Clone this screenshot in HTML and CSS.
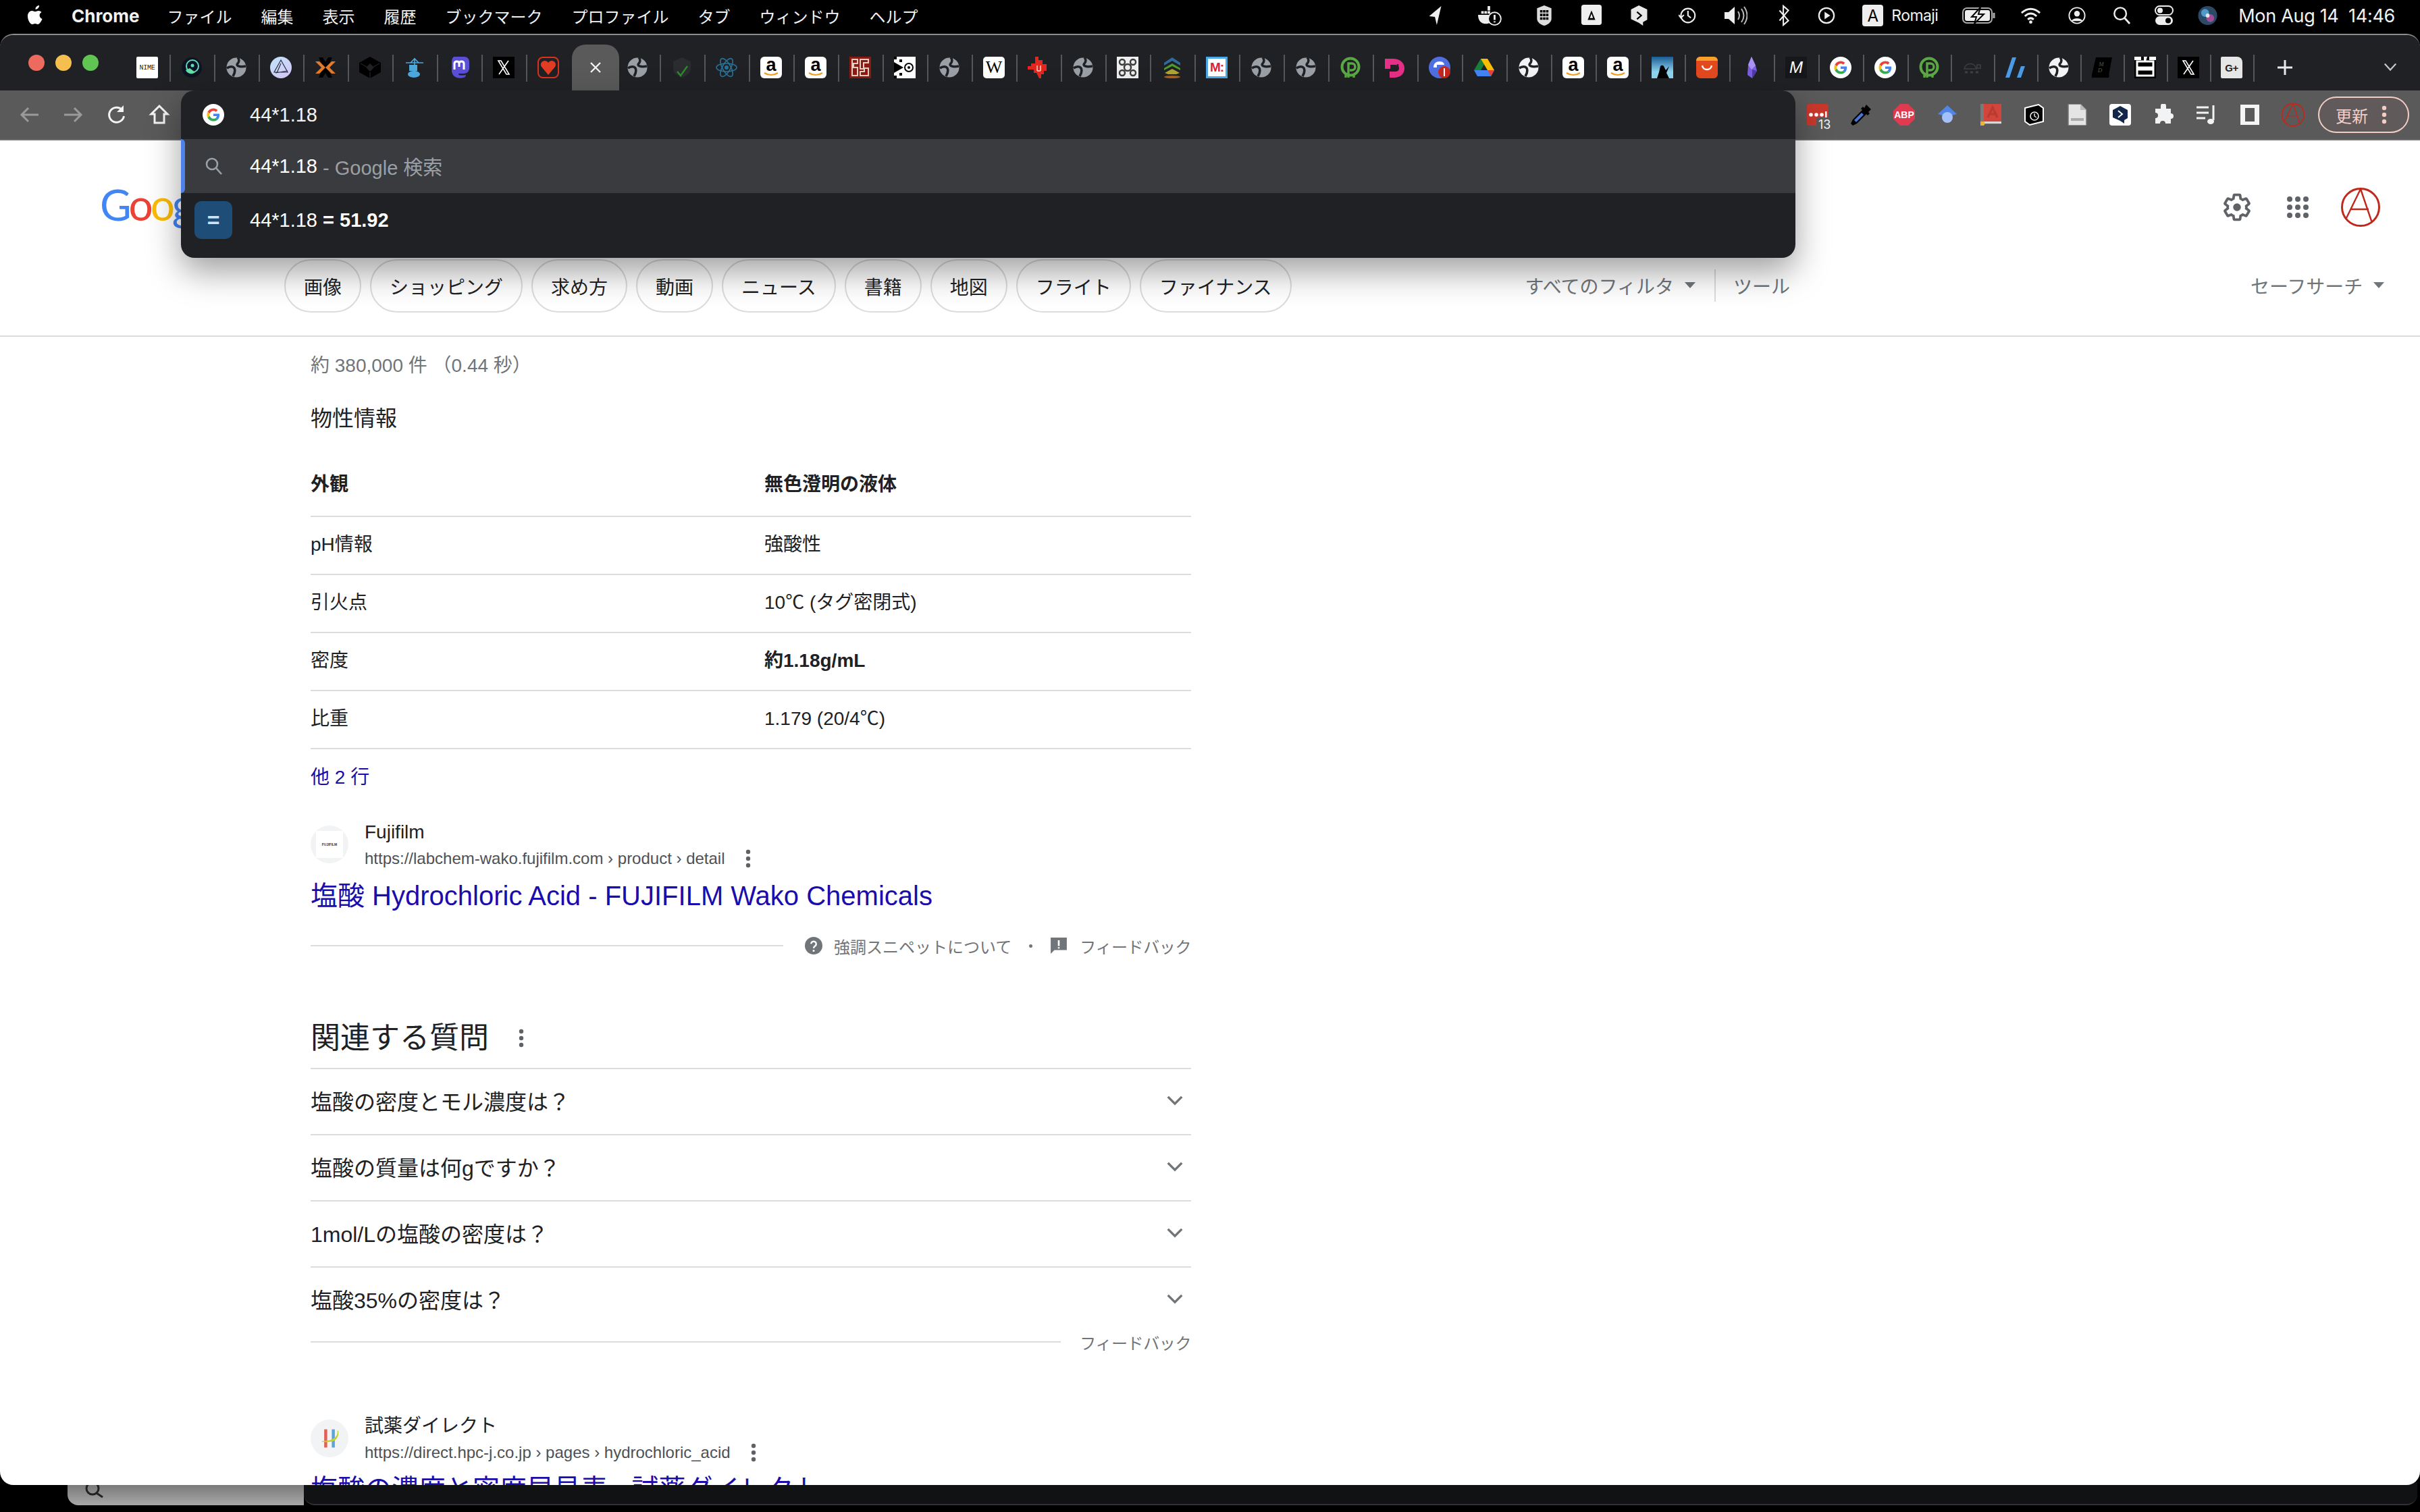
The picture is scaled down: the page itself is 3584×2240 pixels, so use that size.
FILE: index.html
```html
<!DOCTYPE html>
<html lang="ja">
<head>
<meta charset="utf-8">
<title>44*1.18 - Google 検索</title>
<link rel="stylesheet" href="styles.css">
</head>
<body>
<svg class="defs" aria-hidden="true">
  <defs>
    <linearGradient id="lilac" x1="0" y1="0" x2="1" y2="1"><stop offset="0" stop-color="#bfe3f7"/><stop offset="1" stop-color="#d9c7fb"/></linearGradient>
    <symbol id="globe" viewBox="0 0 32 32"><circle cx="16" cy="16" r="14.5" fill="currentColor"/><path d="M2 17c4-3 9-3 11 0 1.500 3 1 7-2 12M18 1c3 3 2 7 0 9-3 3 2 6 12 4" fill="none" stroke="#202124" stroke-width="3.600"/></symbol>
    <symbol id="g" viewBox="0 0 32 32"><circle cx="16" cy="16" r="16" fill="#fff"/><g transform="translate(6.4 6.4) scale(.4)"><path fill="#EA4335" d="M24 9.5c3.54 0 6.71 1.22 9.21 3.6l6.85-6.85C35.9 2.38 30.47 0 24 0 14.62 0 6.51 5.38 2.56 13.22l7.98 6.19C12.43 13.72 17.74 9.5 24 9.5z"/><path fill="#4285F4" d="M46.98 24.55c0-1.57-.15-3.09-.38-4.55H24v9.02h12.94c-.58 2.96-2.26 5.48-4.78 7.18l7.73 6c4.51-4.18 7.09-10.36 7.09-17.65z"/><path fill="#FBBC05" d="M10.53 28.59c-.48-1.45-.76-2.99-.76-4.59s.27-3.14.76-4.59l-7.98-6.19C.92 16.46 0 20.12 0 24c0 3.88.92 7.54 2.56 10.78l7.97-6.19z"/><path fill="#34A853" d="M24 48c6.48 0 11.93-2.13 15.89-5.81l-7.73-6c-2.15 1.45-4.92 2.3-8.16 2.3-6.26 0-11.57-4.22-13.47-9.91l-7.98 6.19C6.51 42.62 14.62 48 24 48z"/></g></symbol>
    <symbol id="amazon" viewBox="0 0 32 32"><rect width="32" height="32" rx="6" fill="#fff"/><text x="16" y="21" text-anchor="middle" class="svg-amazon">a</text><path d="M6 24c6 4 14 4 20 0" fill="none" stroke="#f49f1c" stroke-width="2.2"/></symbol>
    <symbol id="xlogo" viewBox="0 0 32 32"><rect width="32" height="32" fill="#000"/><path d="M8 6h4l12 20h-4zM23 6 9 26" fill="none" stroke="#fff" stroke-width="1.6"/></symbol>
    <symbol id="pgreen" viewBox="0 0 32 32"><circle cx="16" cy="15" r="12.500" fill="none" stroke="#5ba744" stroke-width="4"/><path d="M13 31V10h5a5 5 0 0 1 0 10h-3M9 27v4M21 27v4" fill="none" stroke="#5ba744" stroke-width="3.400"/></symbol>
    <symbol id="kebab" viewBox="0 0 8 32"><circle cx="4" cy="6" r="3.2" fill="currentColor"/><circle cx="4" cy="16" r="3.2" fill="currentColor"/><circle cx="4" cy="26" r="3.2" fill="currentColor"/></symbol>
    <symbol id="chev" viewBox="0 0 28 28"><path d="M5 9.5l9 9 9-9" fill="none" stroke="#70757a" stroke-width="3"/></symbol>
    <symbol id="av" viewBox="0 0 60 60"><circle cx="30" cy="30" r="27.5" fill="none" stroke="#c0281c" stroke-width="3"/><path d="M30 3 8 48M30 3l17 50M16 33h26" fill="none" stroke="#c0281c" stroke-width="2.4"/></symbol>
  </defs>
</svg>

<header class="menubar">
  <svg class="apple" viewBox="0 0 26 32"><path fill="#fff" d="M18 1c.3 3-2.500 6-5.500 5.800C12.200 4 15 1.200 18 1zM21.500 11c-1.700 1-2.900 2.700-2.900 4.800 0 2.600 1.600 4.300 3.900 5.200-.7 2.100-3.600 8-6.500 8-1.500 0-2.200-1-4-1s-2.600 1-4 1C4.500 29 1 22.500 1 17c0-5 3.200-8 6.300-8 1.800 0 3.200 1.200 4.600 1.200 1.300 0 3-1.300 5-1.300 1.800 0 3.500.7 4.600 2.100z"/></svg>
  <b class="menu-app">Chrome</b>
  <nav class="menu-items">
    <span>ファイル</span><span>編集</span><span>表示</span><span>履歴</span><span>ブックマーク</span><span>プロファイル</span><span>タブ</span><span>ウィンドウ</span><span>ヘルプ</span>
  </nav>
  <div class="status">
    <svg class="st w22" viewBox="0 0 22 34"><path fill="#eee" d="M20 2 13 32l-3-13-9-1z"/></svg>
    <svg class="st w40 m48" viewBox="0 0 40 34"><path fill="#eee" d="M3 16h24c0 8-3 14-12 14C7 30 3 24 3 16zM8 10h4v4H8zM13 10h4v4h-4zM18 10h4v4h-4zM18 2h4v7h-4z"/><circle cx="29" cy="22" r="10" fill="#000" stroke="#eee" stroke-width="2"/><path d="M29 16v8M29 26v2" stroke="#eee" stroke-width="3"/></svg>
    <svg class="st w28 m48" viewBox="0 0 28 36"><path fill="#ddd" d="M14 1l12 5v17c0 6-6 10-12 12C8 33 2 29 2 23V6z"/><path fill="#000" d="M7 9h4v4H7zM12 9h4v4h-4zM17 9h4v4h-4zM7 15h4v4H7zM12 15h4v4h-4zM17 15h4v4h-4zM7 21h4v4H7zM12 21h4v4h-4zM17 21h4v4h-4z"/></svg>
    <svg class="st w32 m40" viewBox="0 0 32 34"><rect width="32" height="32" rx="4" fill="#eee"/><path d="M16 9l6 15H10z" fill="#000"/><path d="M16 14l2.500 7h-5z" fill="#eee"/></svg>
    <svg class="st w29 m40" viewBox="0 0 29 36"><path fill="#e8e8e8" d="M14 1l14 7v17l-7 4 0 6-7-5-13-6V8z"/><path d="M11 12l7 6-7 6" fill="none" stroke="#000" stroke-width="2.500"/></svg>
    <svg class="st w26 m44" viewBox="0 0 30 30"><circle cx="16" cy="15" r="12" fill="none" stroke="#eee" stroke-width="2.400"/><path d="M16 7v8l5 4M0 14l4 5 5-5" fill="none" stroke="#eee" stroke-width="2.400"/></svg>
    <svg class="st w36 m40" viewBox="0 0 36 30"><path fill="#eee" d="M2 10h6l9-8v26l-9-8H2z"/><path d="M22 9q4 6 0 12M27 5q7 10 0 20M31 2q9 13 0 26" fill="none" stroke="#bbb" stroke-width="2"/></svg>
    <svg class="st w20 m44" viewBox="0 0 20 34"><path d="M3 9l14 16-8 7V2l8 7L3 25" fill="none" stroke="#eee" stroke-width="2.200"/></svg>
    <svg class="st w26 m40" viewBox="0 0 28 28"><circle cx="14" cy="14" r="12" fill="none" stroke="#eee" stroke-width="2.400"/><path d="M11 8l9 6-9 6z" fill="#eee"/></svg>
    <span class="input-box m40">A</span>
    <span class="romaji">Romaji</span>
    <svg class="st w50 m36" viewBox="0 0 50 26"><rect x="1" y="2" width="43" height="22" rx="6" fill="none" stroke="#aaa" stroke-width="2"/><rect x="4" y="5" width="37" height="16" rx="3" fill="#eee"/><path d="M47 9v8" stroke="#aaa" stroke-width="3"/><path d="M27 1 14 15h7l-3 10 14-14h-8z" fill="#eee" stroke="#000" stroke-width="2"/></svg>
    <svg class="st w31 m36" viewBox="0 0 32 26"><path d="M2 9q14-12 28 0M7 14q9-8 18 0M11.500 19q4.500-4 9 0" fill="none" stroke="#eee" stroke-width="3"/><circle cx="16" cy="23" r="2.500" fill="#eee"/></svg>
    <svg class="st w26 m40" viewBox="0 0 28 28"><circle cx="14" cy="14" r="12.500" fill="none" stroke="#eee" stroke-width="2"/><circle cx="14" cy="11" r="4.500" fill="#eee"/><path d="M5 23c2-6 16-6 18 0z" fill="#eee"/></svg>
    <svg class="st w26 m40" viewBox="0 0 28 30"><circle cx="12" cy="12" r="9.500" fill="none" stroke="#eee" stroke-width="2.600"/><path d="M19 19l8 9" stroke="#eee" stroke-width="3"/></svg>
    <svg class="st w28 m36" viewBox="0 0 28 30"><rect x="1" y="1" width="26" height="13" rx="6.500" fill="none" stroke="#eee" stroke-width="2"/><circle cx="8" cy="7.500" r="4" fill="#eee"/><rect x="1" y="16" width="26" height="13" rx="6.500" fill="#eee"/><circle cx="20" cy="22.500" r="4" fill="#000"/></svg>
    <svg class="st w29 m36 siri" viewBox="0 0 30 30"><circle cx="15" cy="15" r="14.500" fill="#2b4a66"/><circle cx="11" cy="11" r="6" fill="#4f9ac9"/><circle cx="19" cy="19" r="6" fill="#a14d96"/><circle cx="15" cy="15" r="3" fill="#e3e3e3"/></svg>
    <span class="clock">Mon Aug 14&nbsp; 14:46</span>
  </div>
</header>

<div class="window">
  <div class="tabstrip">
    <div class="lights"><i class="red"></i><i class="yellow"></i><i class="green"></i></div>
    <div class="tabs">
      <div class="tab"><span class="nime">NIME</span></div>
      <div class="tab"><svg class="fav" viewBox="0 0 32 32"><circle cx="16" cy="16" r="15" fill="#0c1424"/><circle cx="17" cy="14" r="9" fill="none" stroke="#5fdcbc" stroke-width="2"/><path d="M7 20a9 9 0 0 0 14 3l-8-6z" fill="#62e0a5"/><circle cx="17" cy="13" r="2.500" fill="#5fdcbc"/></svg></div>
      <div class="tab"><svg class="fav c-gray"><use href="#globe"/></svg></div>
      <div class="tab"><svg class="fav" viewBox="0 0 32 32"><circle cx="16" cy="16" r="16" fill="url(#lilac)"/><path d="M16 5 6 23h20zM16 10 10 24M8 24l18-3" fill="none" stroke="#2c3040" stroke-width="1.200"/></svg></div>
      <div class="tab"><svg class="fav" viewBox="0 0 32 32"><path d="M6 1h6l4 7 4-7h6l-7 15 7 15h-6l-4-7-4 7H6l7-15z" fill="#000"/><path d="M1 7h6l9 9-9 9H1l9-9zM31 7h-6l-9 9 9 9h6l-9-9z" fill="#e5792a"/></svg></div>
      <div class="tab"><svg class="fav" viewBox="0 0 32 32"><path d="M16 0 32 9v14l-16 9L0 23V9z" fill="#000"/><path d="M16 11l5 5-5 5-5-5zM2 10l9 5M30 10l-9 5M16 23v9" stroke="#202124" stroke-width="1.400" fill="#202124"/></svg></div>
      <div class="tab"><svg class="fav" viewBox="0 0 32 32"><path d="M3 9h26M16 2v20M10 9l6-6 6 6" fill="none" stroke="#4da8dc" stroke-width="1.600"/><rect x="8" y="12" width="12" height="9" fill="#4da8dc"/><ellipse cx="15" cy="26" rx="9" ry="5" fill="#4da8dc"/></svg></div>
      <div class="tab"><svg class="fav" viewBox="0 0 32 32"><path d="M9 0h14c5 0 8 3 8 8v9c0 5-4 8-8 8h-8c0 3 3 3 11 2l-1 3c-6 3-18 3-20-8V8c0-5 2-8 4-8z" fill="#5b4fd8"/><path d="M9 19V10c0-4 7-4 7 0v5M16 15v-5c0-4 7-4 7 0v9" fill="none" stroke="#fff" stroke-width="3"/></svg></div>
      <div class="tab"><svg class="fav"><use href="#xlogo"/></svg></div>
      <div class="tab nosep"><svg class="fav" viewBox="0 0 32 32"><rect x="1" y="1" width="30" height="30" rx="7" fill="#202124" stroke="#d8321e" stroke-width="2"/><path d="M16 27 6 15c-3-5 1-9 5-9 3 0 5 3 5 3s2-3 5-3c4 0 8 4 5 9z" fill="#e23d24"/></svg></div>
      <div class="tab active nosep"><svg class="close" viewBox="0 0 20 20"><path d="M3 3l14 14M17 3 3 17" stroke="#f1f3f4" stroke-width="2.400"/></svg></div>
      <div class="tab"><svg class="fav c-gray"><use href="#globe"/></svg></div>
      <div class="tab"><svg class="fav" viewBox="0 0 32 32"><path d="M16 1 29 7v11c0 7-8 11-13 13C10 29 3 25 3 18V7z" fill="#2a2c2f"/><path d="M9 22l5 6 10-14" fill="none" stroke="#2e8b2e" stroke-width="2.400"/></svg></div>
      <div class="tab"><svg class="fav" viewBox="0 0 32 32"><g fill="none" stroke="#2a7198" stroke-width="1.700"><ellipse cx="16" cy="16" rx="15" ry="6"/><ellipse cx="16" cy="16" rx="15" ry="6" transform="rotate(60 16 16)"/><ellipse cx="16" cy="16" rx="15" ry="6" transform="rotate(120 16 16)"/></g><circle cx="16" cy="16" r="3" fill="#2a7198"/></svg></div>
      <div class="tab"><svg class="fav"><use href="#amazon"/></svg></div>
      <div class="tab"><svg class="fav"><use href="#amazon"/></svg></div>
      <div class="tab"><svg class="fav" viewBox="0 0 32 32"><rect width="32" height="32" fill="#8a1a14"/><path d="M4 4h8v6H6v6h6v12H4zM16 4h12v5h-7v8h7v11H16v-6h6v-4h-6z" fill="none" stroke="#e6cfc0" stroke-width="2"/></svg></div>
      <div class="tab"><svg class="fav" viewBox="0 0 32 32"><rect width="32" height="32" fill="#fff"/><path d="M0 0h4v4H0zM0 8l14 8L0 24zM0 28h4v4H0zM8 4h4v4H8zM8 24h4v4H8z" fill="#000"/><circle cx="22" cy="16" r="6" fill="none" stroke="#000" stroke-width="2"/><circle cx="22" cy="16" r="2" fill="#000"/></svg></div>
      <div class="tab"><svg class="fav c-gray"><use href="#globe"/></svg></div>
      <div class="tab"><svg class="fav" viewBox="0 0 32 32"><rect width="32" height="32" rx="5" fill="#fff"/><text x="16" y="24" text-anchor="middle" class="svg-w">W</text></svg></div>
      <div class="tab"><svg class="fav" viewBox="0 0 32 32"><path d="M11 0h5v5h6v6h6v10h-4v5h-4v6h-3l-4-8H9v-5H0v-5h5v-4h6z" fill="#e2281e"/><path d="M13 13h2v8h-2zM18 13h2v8h-2zM14 20h5v2h-5z" fill="#f7a8a2"/></svg></div>
      <div class="tab"><svg class="fav c-gray"><use href="#globe"/></svg></div>
      <div class="tab"><svg class="fav" viewBox="0 0 32 32"><rect width="32" height="32" fill="#eee"/><g fill="none" stroke="#3b3b3b" stroke-width="2.400"><circle cx="16" cy="16" r="5"/><circle cx="8" cy="8" r="4"/><circle cx="24" cy="8" r="4"/><circle cx="8" cy="24" r="4"/><circle cx="24" cy="24" r="4"/></g></svg></div>
      <div class="tab"><svg class="fav" viewBox="0 0 32 32"><path d="M4 9 16 1l12 8v4L16 6 4 13z" fill="#2e6a9e"/><path d="M4 17l12-7 12 7v3l-12-6-12 6z" fill="#4e9a2e"/><path d="M5 24l11-6 11 6-5 2H10z" fill="#b0a332"/><ellipse cx="16" cy="30" rx="12" ry="2" fill="#a9601f"/></svg></div>
      <div class="tab"><span class="mcol">M:</span></div>
      <div class="tab"><svg class="fav c-gray"><use href="#globe"/></svg></div>
      <div class="tab"><svg class="fav c-gray"><use href="#globe"/></svg></div>
      <div class="tab"><svg class="fav"><use href="#pgreen"/></svg></div>
      <div class="tab"><svg class="fav" viewBox="0 0 32 32"><path d="M1 3h12c10 0 17 6 17 14 0 9-7 14-15 14H8v-9h8c4 0 6-2 6-5 0-4-3-5-7-5H9v6H1z" fill="#e62f86"/><path d="M12 17h8v-6" stroke="#202124" stroke-width="2.400" fill="none"/></svg></div>
      <div class="tab"><svg class="fav" viewBox="0 0 32 32"><circle cx="16" cy="16" r="16" fill="#4f6fe0"/><path d="M7 16c0-6 4-9 9-9s7 3 7 5H12v4z" fill="#fff"/><circle cx="23" cy="23" r="9" fill="#c5271d"/><path d="M23 17v12" stroke="#fff" stroke-width="2"/></svg></div>
      <div class="tab"><svg class="fav" viewBox="0 0 32 32"><path d="M11 3h10L11 20H1z" fill="#188038"/><path d="M21 3l10 17H21L11 3z" fill="#fbbc04"/><path d="M1 20h30l-5 9H6z" fill="#4285f4"/><path d="M21 20h10l-5 9z" fill="#ea4335"/></svg></div>
      <div class="tab"><svg class="fav c-white"><use href="#globe"/></svg></div>
      <div class="tab"><svg class="fav"><use href="#amazon"/></svg></div>
      <div class="tab"><svg class="fav"><use href="#amazon"/></svg></div>
      <div class="tab"><svg class="fav" viewBox="0 0 32 32"><defs><linearGradient id="kin" x1="0" y1="0" x2="0" y2="1"><stop offset="0" stop-color="#1a5c94"/><stop offset=".7" stop-color="#8fd3ee"/></linearGradient></defs><rect width="32" height="32" fill="url(#kin)"/><path d="M8 32l3-9 2-9a3 3 0 0 1 5 0l3 6 5-6-4 10 4 8z" fill="#000"/></svg></div>
      <div class="tab"><svg class="fav" viewBox="0 0 32 32"><rect width="32" height="32" rx="6" fill="#e3491f"/><path d="M0 6a6 6 0 0 1 6-6h20a6 6 0 0 1 6 6z" fill="#f5a12c"/><path d="M9 13c1 8 13 8 14 0" fill="none" stroke="#fff" stroke-width="2.400"/></svg></div>
      <div class="tab"><svg class="fav" viewBox="0 0 32 32"><path d="M16 0l6 13 2 8-7 11-7-5 1-15z" fill="#7c5fe0"/><path d="M16 0l6 13-6 6-5-7z" fill="#a993f2"/><path d="M17 32l7-11-7-2z" fill="#4f3aa8"/></svg></div>
      <div class="tab"><span class="m-italic">M</span></div>
      <div class="tab"><svg class="fav"><use href="#g"/></svg></div>
      <div class="tab"><svg class="fav"><use href="#g"/></svg></div>
      <div class="tab narrow"><svg class="fav"><use href="#pgreen"/></svg></div>
      <div class="tab narrow"><svg class="fav" viewBox="0 0 32 32"><path d="M4 18c2-10 16-10 18 0zM23 12h5v5h-5z" fill="none" stroke="#3d3f42" stroke-width="1.600"/><path d="M5 23h4M13 23h4M21 23h4" stroke="#3d3f42" stroke-width="3"/></svg></div>
      <div class="tab narrow"><svg class="fav" viewBox="0 0 32 32"><path d="M11 1h6L7 31H1zM24 14h6l-6 17h-6z" fill="#4a9ae8"/></svg></div>
      <div class="tab narrow"><svg class="fav c-white"><use href="#globe"/></svg></div>
      <div class="tab narrow"><svg class="fav" viewBox="0 0 32 32"><path d="M7 1h24l-5 26H1z" fill="#000"/><path d="M1 27v4h25l1-4" fill="#000"/><text x="15" y="14" text-anchor="middle" class="svg-md">M</text><text x="13" y="23" text-anchor="middle" class="svg-md">D</text></svg></div>
      <div class="tab narrow"><svg class="fav" viewBox="0 0 32 32"><rect width="32" height="32" fill="#000"/><path d="M4 7h24v9H4zM4 19h24v9H4z" fill="#000" stroke="#fff" stroke-width="3"/><path d="M14 0h5l-2 7h-3z" fill="#fff"/><path d="M0 0h10v5H0zM22 0h10v5H22z" fill="#fff"/></svg></div>
      <div class="tab narrow"><svg class="fav"><use href="#xlogo"/></svg></div>
      <div class="tab narrow"><span class="gplus">G+</span></div>
    </div>
    <svg class="plus" viewBox="0 0 24 24"><path d="M12 1v22M1 12h22" stroke="#e8eaed" stroke-width="3"/></svg>
    <svg class="tab-chev" viewBox="0 0 24 24"><path d="M3 7l9 10 9-10" fill="none" stroke="#c4c7c5" stroke-width="2.400"/></svg>
  </div>

  <div class="toolbar">
    <div class="tool-nav">
      <svg class="ti" viewBox="0 0 32 32"><path d="M29 16H5M14 6 4 16l10 10" fill="none" stroke="#9a9a9a" stroke-width="3"/></svg>
      <svg class="ti" viewBox="0 0 32 32"><path d="M3 16h24M18 6l10 10-10 10" fill="none" stroke="#9a9a9a" stroke-width="3"/></svg>
      <svg class="ti" viewBox="0 0 32 32"><path d="M25 9a11 11 0 1 0 2.500 9" fill="none" stroke="#f1f3f4" stroke-width="3"/><path d="M27 2v10H17z" fill="#f1f3f4"/></svg>
      <svg class="ti" viewBox="0 0 32 32"><path d="M16 3 4 15h5v13h14V15h5z" fill="none" stroke="#f1f3f4" stroke-width="3"/></svg>
    </div>
    <div class="tool-ext">
      <div class="ext-box"><svg class="ti" viewBox="0 0 32 32"><rect width="32" height="32" rx="3" fill="#c9372c"/><circle cx="6" cy="16" r="2.800" fill="#fff"/><circle cx="14" cy="16" r="2.800" fill="#fff"/><circle cx="22" cy="16" r="2.800" fill="#fff"/><rect x="27" y="11" width="2.500" height="10" fill="#fff"/></svg><span class="badge">13</span></div>
      <svg class="ti" viewBox="0 0 32 32"><path d="M24 1l7 7-4 4 2 2-3 3-2-2L10 29l-6 3-3-3 3-6L18 9l-2-2 3-3 2 2z" fill="#000"/><path d="M17 13l3 3L9 27l-3-3z" fill="#4a74d8"/></svg>
      <svg class="ti" viewBox="0 0 32 32"><path d="M10 0h12l10 10v12L22 32H10L0 22V10z" fill="#e03a50"/><text x="16" y="21" text-anchor="middle" class="svg-abp">ABP</text></svg>
      <svg class="ti" viewBox="0 0 32 32"><path d="M16 2l14 13-14 4L2 15z" fill="#4f86e8"/><circle cx="16" cy="20" r="8" fill="#a3c0fa"/></svg>
      <svg class="ti" viewBox="0 0 32 32"><rect x="6" width="26" height="30" fill="#d1453b"/><rect x="1" width="5" height="30" fill="#7a7a7a"/><rect x="6" y="26" width="26" height="3" fill="#d8d8d8"/><path d="M12 20l7-15 7 15M15 15h8" fill="none" stroke="#b83a31" stroke-width="3"/><path d="M1 26h5l2 3-2 3H1z" fill="#e5b53c"/></svg>
      <svg class="ti" viewBox="0 0 32 32"><path d="M3 6l20-5 7 5v20l-20 5-7-5z" fill="#000" stroke="#fff" stroke-width="2"/><circle cx="17" cy="18" r="6" fill="none" stroke="#eee" stroke-width="1.600"/><path d="M17 14v4l3 2" stroke="#eee" fill="none" stroke-width="1.400"/></svg>
      <svg class="ti" viewBox="0 0 32 32"><path d="M3 0h18l9 9v23H3z" fill="#e4e4e4" stroke="#777" stroke-width="1.600"/><path d="M21 0v9h9" fill="#bbb"/><rect x="7" y="21" width="19" height="4" fill="#aaa"/></svg>
      <svg class="ti" viewBox="0 0 32 32"><rect width="32" height="32" rx="4" fill="#fff"/><path d="M16 3l11 6v12l-5 3v5l-6-4-11-5V9z" fill="#13274b"/><path d="M13 10l6 5-6 5" fill="none" stroke="#fff" stroke-width="2"/></svg>
      <svg class="ti" viewBox="0 0 32 32"><path d="M12 3a4 4 0 0 1 8 0v4h7v7a4 4 0 0 1 0 8v7h-8a4 4 0 0 0-8 0H4v-8a4 4 0 0 0 0-8V7h8z" fill="#f1f3f4"/></svg>
      <svg class="ti" viewBox="0 0 32 32"><path d="M1 5h18M1 13h18M1 21h13" stroke="#f1f3f4" stroke-width="3"/><path d="M26 2v22" stroke="#f1f3f4" stroke-width="3"/><ellipse cx="22" cy="26" rx="5" ry="4" fill="#f1f3f4"/></svg>
      <svg class="ti" viewBox="0 0 32 32"><path d="M2 1h28v30H2zM9 6v20h14V6z" fill="#f4f4f4" fill-rule="evenodd"/></svg>
      <svg class="ti-av"><use href="#av"/></svg>
    </div>
    <div class="update"><span>更新</span><svg class="update-dots"><use href="#kebab"/></svg></div>
  </div>

  <main class="page">
    <div class="page-head">
      <div class="head-top">
        <div class="logo"><span class="lb">G</span><span class="lr">o</span><span class="ly">o</span><span class="lb">g</span><span class="lg">l</span><span class="lr">e</span></div>
        <div class="head-icons">
          <svg class="gear" viewBox="0 0 24 24"><path fill="none" stroke="#5f6368" stroke-width="2" d="M19.140 12.940c.04-.3.06-.61.06-.94 0-.32-.02-.64-.07-.94l2.030-1.580c.18-.14.23-.41.12-.61l-1.920-3.320c-.12-.22-.37-.29-.59-.22l-2.390.96c-.5-.38-1.030-.7-1.620-.94l-.36-2.540c-.04-.24-.24-.41-.48-.41h-3.840c-.24 0-.43.17-.47.41l-.36 2.540c-.59.24-1.130.57-1.620.94l-2.390-.96c-.22-.08-.47 0-.59.22L2.740 8.870c-.12.21-.08.47.12.61l2.030 1.580c-.05.3-.09.63-.09.94s.02.64.07.94l-2.030 1.580c-.18.14-.23.41-.12.61l1.920 3.320c.12.22.37.29.59.22l2.390-.96c.5.38 1.030.7 1.620.94l.36 2.540c.05.24.24.41.48.41h3.840c.24 0 .44-.17.47-.41l.36-2.540c.59-.24 1.130-.56 1.620-.94l2.390.96c.22.08.47 0 .59-.22l1.920-3.320c.12-.22.07-.47-.12-.61l-2.010-1.580z"/><circle cx="12" cy="12" r="3" fill="#5f6368"/></svg>
          <svg class="apps" viewBox="0 0 34 34"><g fill="#5f6368"><circle cx="5" cy="5" r="4"/><circle cx="17" cy="5" r="4"/><circle cx="29" cy="5" r="4"/><circle cx="5" cy="17" r="4"/><circle cx="17" cy="17" r="4"/><circle cx="29" cy="17" r="4"/><circle cx="5" cy="29" r="4"/><circle cx="17" cy="29" r="4"/><circle cx="29" cy="29" r="4"/></g></svg>
          <svg class="avatar"><use href="#av"/></svg>
        </div>
      </div>
      <div class="head-bottom">
        <div class="chips">
          <span class="chip">画像</span><span class="chip">ショッピング</span><span class="chip">求め方</span><span class="chip">動画</span><span class="chip">ニュース</span><span class="chip">書籍</span><span class="chip">地図</span><span class="chip">フライト</span><span class="chip">ファイナンス</span>
        </div>
        <div class="filters"><span>すべてのフィルタ</span><i class="tri"></i><span class="filter-tools">ツール</span></div>
        <div class="safe"><span>セーフサーチ</span><i class="tri"></i></div>
      </div>
    </div>

    <div class="results">
      <p class="stats">約 380,000 件 （0.44 秒）</p>
      <h2 class="snippet-h">物性情報</h2>
      <div class="facts">
        <div class="fact fact-first"><b>外観</b><b>無色澄明の液体</b></div>
        <div class="fact"><span>pH情報</span><span>強酸性</span></div>
        <div class="fact"><span>引火点</span><span>10℃ (タグ密閉式)</span></div>
        <div class="fact"><span>密度</span><b>約1.18g/mL</b></div>
        <div class="fact"><span>比重</span><span>1.179 (20/4℃)</span></div>
      </div>
      <a class="more">他 2 行</a>

      <div class="source">
        <span class="site-ico"><span class="fuji-box">FUJIFILM</span></span>
        <div class="source-text">
          <div class="site-name">Fujifilm</div>
          <div class="site-url"><span>https://labchem-wako.fujifilm.com › product › detail</span><svg class="kebab"><use href="#kebab"/></svg></div>
        </div>
      </div>
      <a class="res-title">塩酸 Hydrochloric Acid - FUJIFILM Wako Chemicals</a>
      <div class="snip-foot">
        <i class="rule"></i>
        <svg class="foot-ico" viewBox="0 0 24 24"><circle cx="12" cy="12" r="12" fill="#70757a"/><path d="M8.500 9.500a3.500 3.500 0 1 1 5.500 3c-1.500 1-2 1.500-2 3" fill="none" stroke="#fff" stroke-width="2.200"/><circle cx="12" cy="19" r="1.400" fill="#fff"/></svg>
        <span class="foot-about">強調スニペットについて</span>
        <i class="foot-dot"></i>
        <svg class="foot-ico" viewBox="0 0 24 24"><path d="M1 1h22v17H6l-5 5z" fill="#70757a"/><path d="M12 4.500v8M12 14v2" stroke="#fff" stroke-width="2.400"/></svg>
        <span class="foot-fb">フィードバック</span>
      </div>

      <div class="paa-head"><h2>関連する質問</h2><svg class="kebab paa-kebab"><use href="#kebab"/></svg></div>
      <div class="paa">
        <div class="q"><span>塩酸の密度とモル濃度は？</span><svg class="q-chev"><use href="#chev"/></svg></div>
        <div class="q"><span>塩酸の質量は何gですか？</span><svg class="q-chev"><use href="#chev"/></svg></div>
        <div class="q"><span>1mol/Lの塩酸の密度は？</span><svg class="q-chev"><use href="#chev"/></svg></div>
        <div class="q"><span>塩酸35%の密度は？</span><svg class="q-chev"><use href="#chev"/></svg></div>
      </div>
      <div class="paa-foot"><i class="rule"></i><span class="foot-fb-plain">フィードバック</span></div>

      <div class="source source-2">
        <span class="site-ico"><svg class="hpc" viewBox="0 0 32 32"><path d="M11 4v24" stroke="#e2605a" stroke-width="4"/><path d="M21 4v24" stroke="#5aa6dc" stroke-width="4"/><path d="M27 6c1 8-6 14-21 14 8 1 15 1 19-4 2-3 3-6 2-10z" fill="#c4d22f" stroke="#c4d22f"/></svg></span>
        <div class="source-text">
          <div class="site-name">試薬ダイレクト</div>
          <div class="site-url"><span>https://direct.hpc-j.co.jp › pages › hydrochloric_acid</span><svg class="kebab"><use href="#kebab"/></svg></div>
        </div>
      </div>
      <a class="res-title res-title-2">塩酸の濃度と密度早見表 - 試薬ダイレクト</a>
    </div>
  </main>

  <div class="omni">
    <div class="omni-row omni-input"><svg class="omni-ico"><use href="#g"/></svg><span>44*1.18</span></div>
    <div class="omni-row omni-sel"><svg class="omni-ico" viewBox="0 0 32 32"><circle cx="14" cy="13" r="8" fill="none" stroke="#9aa0a6" stroke-width="2.600"/><path d="M20 19l8 9" stroke="#9aa0a6" stroke-width="2.600"/></svg><span>44*1.18</span><span class="omni-dim">&nbsp;- Google 検索</span></div>
    <div class="omni-row omni-calc"><span class="calc-ico">=</span><span>44*1.18 <b>= 51.92</b></span></div>
  </div>
</div>

<div class="behind">
  <div class="blue-strip"></div>
  <div class="behind-row">
    <div class="behind-search"><svg class="behind-mag" viewBox="0 0 28 28"><circle cx="11" cy="9" r="9" fill="none" stroke="#222" stroke-width="3"/><path d="M17 16l9 6" stroke="#222" stroke-width="3"/></svg></div>
    <div class="behind-dark"></div>
  </div>
</div>
</body>
</html>
```

FILE: styles.css
```css
* { box-sizing: border-box; }
html, body { margin: 0; padding: 0; }
body {
  width: 3584px;
  height: 2240px;
  overflow: hidden;
  background: #000;
  font-family: "Liberation Sans", "Noto Sans CJK JP", sans-serif;
  color: #202124;
}
.defs { position: absolute; width: 0; height: 0; }
.svg-amazon { font: 700 27px "Liberation Sans", sans-serif; fill: #000; }
.svg-w { font: 400 26px "Liberation Serif", serif; fill: #000; }
.svg-abp { font: 700 14px "Liberation Sans", sans-serif; fill: #fff; }
.svg-md { font: italic 400 9px "Liberation Serif", serif; fill: #555; }

/* macOS menu bar */
.menubar {
  height: 50px;
  display: flex;
  align-items: center;
  padding: 0 37px 4px 40px;
  color: #f2f2f2;
  font: 400 24px "Noto Sans CJK JP", sans-serif;
}
.apple { width: 26px; height: 32px; flex: none; }
.menu-app { margin-left: 40px; font: 700 26px Inter, "Liberation Sans", sans-serif; }
.menu-items { display: flex; gap: 43px; margin-left: 41px; }
.status { margin-left: auto; display: flex; align-items: center; }
.st { height: 32px; flex: none; }
.w20 { width: 20px; } .w22 { width: 22px; } .w26 { width: 26px; } .w28 { width: 28px; }
.w29 { width: 29px; } .w31 { width: 31px; } .w32 { width: 32px; } .w36 { width: 36px; }
.w40 { width: 40px; } .w50 { width: 50px; }
.m36 { margin-left: 36px; } .m40 { margin-left: 40px; } .m44 { margin-left: 44px; } .m48 { margin-left: 48px; }
.input-box {
  width: 31px; height: 32px; border-radius: 4px; background: #eee; color: #000;
  display: flex; align-items: center; justify-content: center;
  font: 400 24px Inter, sans-serif;
}
.romaji { margin-left: 12px; font: 400 23px Inter, sans-serif; letter-spacing: -.6px; }
.clock { margin-left: 31px; font: 400 27px Inter, sans-serif; letter-spacing: -.3px; white-space: nowrap; }

/* Browser window */
.window {
  position: relative;
  height: 2150px;
  background: #202124;
  border-top: 2px solid #8d8d8d;
  border-radius: 20px;
}
.tabstrip {
  height: 82px;
  padding-top: 14px;
  display: flex;
  background: #202124;
  border-radius: 20px 20px 0 0;
}
.lights { width: 187px; flex: none; display: flex; gap: 16px; padding-left: 42px; align-items: flex-start; padding-top: 15px; }
.lights i { width: 24px; height: 24px; border-radius: 50%; }
.red { background: #ed6a5e; } .yellow { background: #f5bf4f; } .green { background: #61c554; }
.tabs { display: flex; flex: none; }
.tab {
  position: relative;
  width: 66px;
  height: 68px;
  padding-right: 4px;
  display: flex;
  align-items: center;
  justify-content: center;
}
.tab.narrow { width: 64px; }
.tab::after {
  content: "";
  position: absolute;
  right: 0; top: 15px;
  width: 2px; height: 40px;
  background: #55575b;
}
.tab.nosep::after { display: none; }
.tab.active { background: #5a5a5a; border-radius: 20px 20px 0 0; padding-right: 0; width: 70px; margin-right: -4px; }
.tab.active::before {
  content: "";
  position: absolute;
  left: -14px; right: -14px; bottom: 0;
  height: 14px;
  z-index: -1;
  background: #5a5a5a;
  clip-path: polygon(0 100%, 14px 0, 84px 0, 100% 100%);
}
.fav { width: 32px; height: 32px; flex: none; }
.c-gray { color: #9aa0a6; }
.c-white { color: #f1f3f4; }
.close { width: 20px; height: 20px; }
.nime {
  width: 32px; height: 32px; background: #fff; border-radius: 2px; color: #222;
  display: flex; align-items: center; justify-content: center;
  font: 400 10px "Liberation Mono", monospace; letter-spacing: -.3px;
}
.mcol {
  width: 32px; height: 32px; background: #fff; border: 3px solid #4aa8e8; color: #d8233a;
  display: flex; align-items: center; justify-content: center;
  font: 700 19px "Liberation Sans", sans-serif; letter-spacing: -1px;
}
.m-italic {
  width: 32px; height: 32px; background: #16171a; color: #fff;
  display: flex; align-items: center; justify-content: center;
  font: italic 400 24px "Liberation Sans", sans-serif;
}
.gplus {
  width: 32px; height: 32px; background: #e6e6e6; color: #222; border-radius: 2px 8px 2px 2px;
  display: flex; align-items: center; justify-content: center;
  font: 700 15px "Liberation Sans", sans-serif; letter-spacing: -.5px;
}
.plus { width: 24px; height: 24px; margin: 22px 0 0 33px; flex: none; }
.tab-chev { width: 22px; height: 22px; margin: 22px 33px 0 auto; flex: none; }

.toolbar {
  height: 74px;
  background: #5a5a5a;
  border-bottom: 2px solid #6d6d6d;
  display: flex;
  align-items: center;
  padding: 0 16px 0 28px;
}
.tool-nav, .tool-ext { display: flex; gap: 32px; align-items: center; }
.tool-ext { margin-left: auto; margin-right: 21px; }
.ti { width: 32px; height: 32px; flex: none; }
.ti-av { width: 36px; height: 36px; margin: 0 -2px; flex: none; }
.ext-box { position: relative; width: 32px; height: 32px; }
.badge {
  position: absolute; left: 14px; top: 20px;
  padding: 0 3px;
  background: #5a5a5a; border-radius: 4px;
  color: #f1f3f4;
  font: 400 18px Inter, sans-serif;
}
.update {
  width: 135px; height: 54px;
  border: 2px solid #f4cdc6; border-radius: 27px;
  background: #605a5a;
  color: #f4cdc6;
  font-size: 24px;
  display: flex; align-items: center; gap: 20px;
  padding-left: 24px;
}
.update-dots { width: 8px; height: 32px; color: #f4cdc6; }

/* Page */
.page {
  height: 1992px;
  overflow: hidden;
  background: #fff;
  border-radius: 0 0 20px 20px;
}
.page-head { height: 291px; border-bottom: 2px solid #dadce0; }
.head-top {
  height: 176px;
  display: flex;
  justify-content: space-between;
  align-items: center;
  padding: 22px 58px 0 148px;
}
.logo { font: 400 64px Lato, "Liberation Sans", sans-serif; letter-spacing: -4px; margin-top: -10px; }
.lb { color: #4285f4; } .lr { color: #ea4335; } .ly { color: #fbbc05; } .lg { color: #34a853; }
.head-icons { display: flex; align-items: center; gap: 50px; }
.gear { width: 46px; height: 46px; }
.apps { width: 34px; height: 34px; }
.avatar { width: 60px; height: 60px; margin-left: -4px; }
.head-bottom { display: flex; align-items: center; height: 79px; font-size: 28px; }
.chips { display: flex; gap: 13px; padding-left: 421px; }
.chip {
  height: 79px;
  padding: 0 27px;
  border: 2px solid #dadce0;
  border-radius: 40px;
  display: flex; align-items: center;
  white-space: nowrap;
}
.filters, .safe { display: flex; align-items: center; color: #70757a; white-space: nowrap; margin-top: -2px; }
.filters { margin-left: 346px; }
.safe { margin-left: 682px; }
.tri { width: 0; height: 0; margin-left: 16px; border: 8px solid transparent; border-top: 9px solid #70757a; border-bottom: 0; }
.filter-tools { margin-left: 28px; padding: 4px 0 4px 26px; border-left: 2px solid #dadce0; }

.results { margin-left: 460px; width: 1304px; }
.stats { margin: 0; padding-top: 23px; line-height: 40px; font-size: 28px; color: #70757a; }
.snippet-h { margin: 36px 0 0; font-weight: 400; font-size: 32px; line-height: 44px; }
.facts { margin-top: 38px; }
.fact {
  height: 86px;
  padding-bottom: 8px;
  display: grid;
  grid-template-columns: 672px 1fr;
  align-items: center;
  font-size: 28px;
  border-bottom: 2px solid #dadce0;
}
.fact-first { padding-bottom: 14px; }
.more { display: block; margin-top: 22px; line-height: 40px; font-size: 28px; color: #1a0dab; }
.source { display: flex; gap: 24px; margin-top: 41px; }
.source-2 { margin-top: 91px; }
.site-ico {
  width: 56px; height: 56px; margin-top: 10px; flex: none;
  border-radius: 50%; background: #f1f3f4;
  display: flex; align-items: center; justify-content: center;
}
.fuji-box {
  width: 40px; height: 40px; background: #fff; color: #333;
  display: flex; align-items: center; justify-content: center;
  font: 700 5px "Liberation Sans", sans-serif;
}
.hpc { width: 36px; height: 36px; }
.site-name { line-height: 40px; font-size: 28px; }
.site-url { display: flex; align-items: center; margin-top: 1px; line-height: 36px; font-size: 24px; color: #4d5156; }
.kebab { width: 8px; height: 32px; color: #5f6368; margin-left: 30px; flex: none; }
.res-title { display: block; margin-top: 11px; line-height: 52px; font-size: 40px; color: #1a0dab; white-space: nowrap; }
.res-title-2 { margin-top: 10px; }
.snip-foot {
  height: 40px; margin-top: 28px;
  display: flex; align-items: center;
  font-size: 24px; color: #70757a;
}
.rule { flex: 1; height: 2px; background: #dadce0; }
.foot-ico { width: 26px; height: 26px; flex: none; }
.snip-foot .rule { margin-right: 32px; }
.foot-about { margin-left: 17px; white-space: nowrap; }
.foot-dot { width: 5px; height: 5px; margin: 0 26px; border-radius: 50%; background: #70757a; flex: none; }
.foot-fb { margin-left: 18px; white-space: nowrap; letter-spacing: -.4px; }
.paa-head { display: flex; align-items: center; margin-top: 87px; height: 60px; }
.paa-head h2 { margin: 0; font-weight: 400; font-size: 44px; line-height: 60px; }
.paa-kebab { margin-left: 44px; }
.paa { margin-top: 14px; }
.q {
  height: 98px;
  padding-bottom: 4px;
  border-top: 2px solid #dadce0;
  display: flex; align-items: center; justify-content: space-between;
  font-size: 32px;
}
.q-chev { width: 32px; height: 32px; margin-right: 8px; }
.paa-foot { height: 28px; display: flex; align-items: center; font-size: 24px; color: #70757a; }
.paa-foot .rule { margin-right: 28px; }
.foot-fb-plain { letter-spacing: -.4px; white-space: nowrap; }

/* Omnibox dropdown */
.omni {
  position: absolute;
  left: 268px; top: 82px;
  width: 2391px; height: 248px;
  background: #202124;
  border-radius: 20px;
  box-shadow: 0 20px 50px rgba(0, 0, 0, .38);
  color: #fff;
  font-size: 29px;
  overflow: hidden;
}
.omni-row { display: flex; align-items: center; padding-left: 102px; position: relative; }
.omni-input { height: 72px; color: #f1f3f4; }
.omni-sel { height: 80px; background: #3a3b3e; }
.omni-sel::before {
  content: "";
  position: absolute;
  left: 0; top: 0; bottom: 0;
  width: 6px;
  background: #4e82ea;
  border-radius: 0 6px 6px 0;
}
.omni-calc { height: 80px; }
.omni-calc b { font-weight: 700; }
.omni-ico { position: absolute; left: 32px; top: 50%; margin-top: -16px; width: 32px; height: 32px; }
.omni-dim { color: #9aa0a6; }
.calc-ico {
  position: absolute; left: 20px; top: 12px;
  width: 56px; height: 56px;
  border-radius: 10px;
  background: #1e4d78;
  color: #c9e6fd;
  font: 700 32px "Liberation Sans", sans-serif;
  display: flex; align-items: center; justify-content: center;
}

/* Window and desktop behind */
.behind { height: 40px; margin-top: -10px; overflow: hidden; }
.blue-strip {
  height: 6px;
  margin: 0 54px 0 84px;
  background: #1f4d7c;
  border-bottom: 1px solid #b9c6d4;
  border-radius: 0 0 14px 14px;
}
.behind-row { display: flex; height: 34px; padding: 0 4px 0 100px; }
.behind-search {
  width: 350px;
  background: linear-gradient(#737373, #a8a8a8);
  border-radius: 0 0 0 16px;
  padding-left: 26px;
}
.behind-mag { width: 28px; height: 28px; display: block; }
.behind-dark { flex: 1; background: #111214; border-radius: 0 0 16px 16px; border-bottom: 2px solid #303134; }
```
